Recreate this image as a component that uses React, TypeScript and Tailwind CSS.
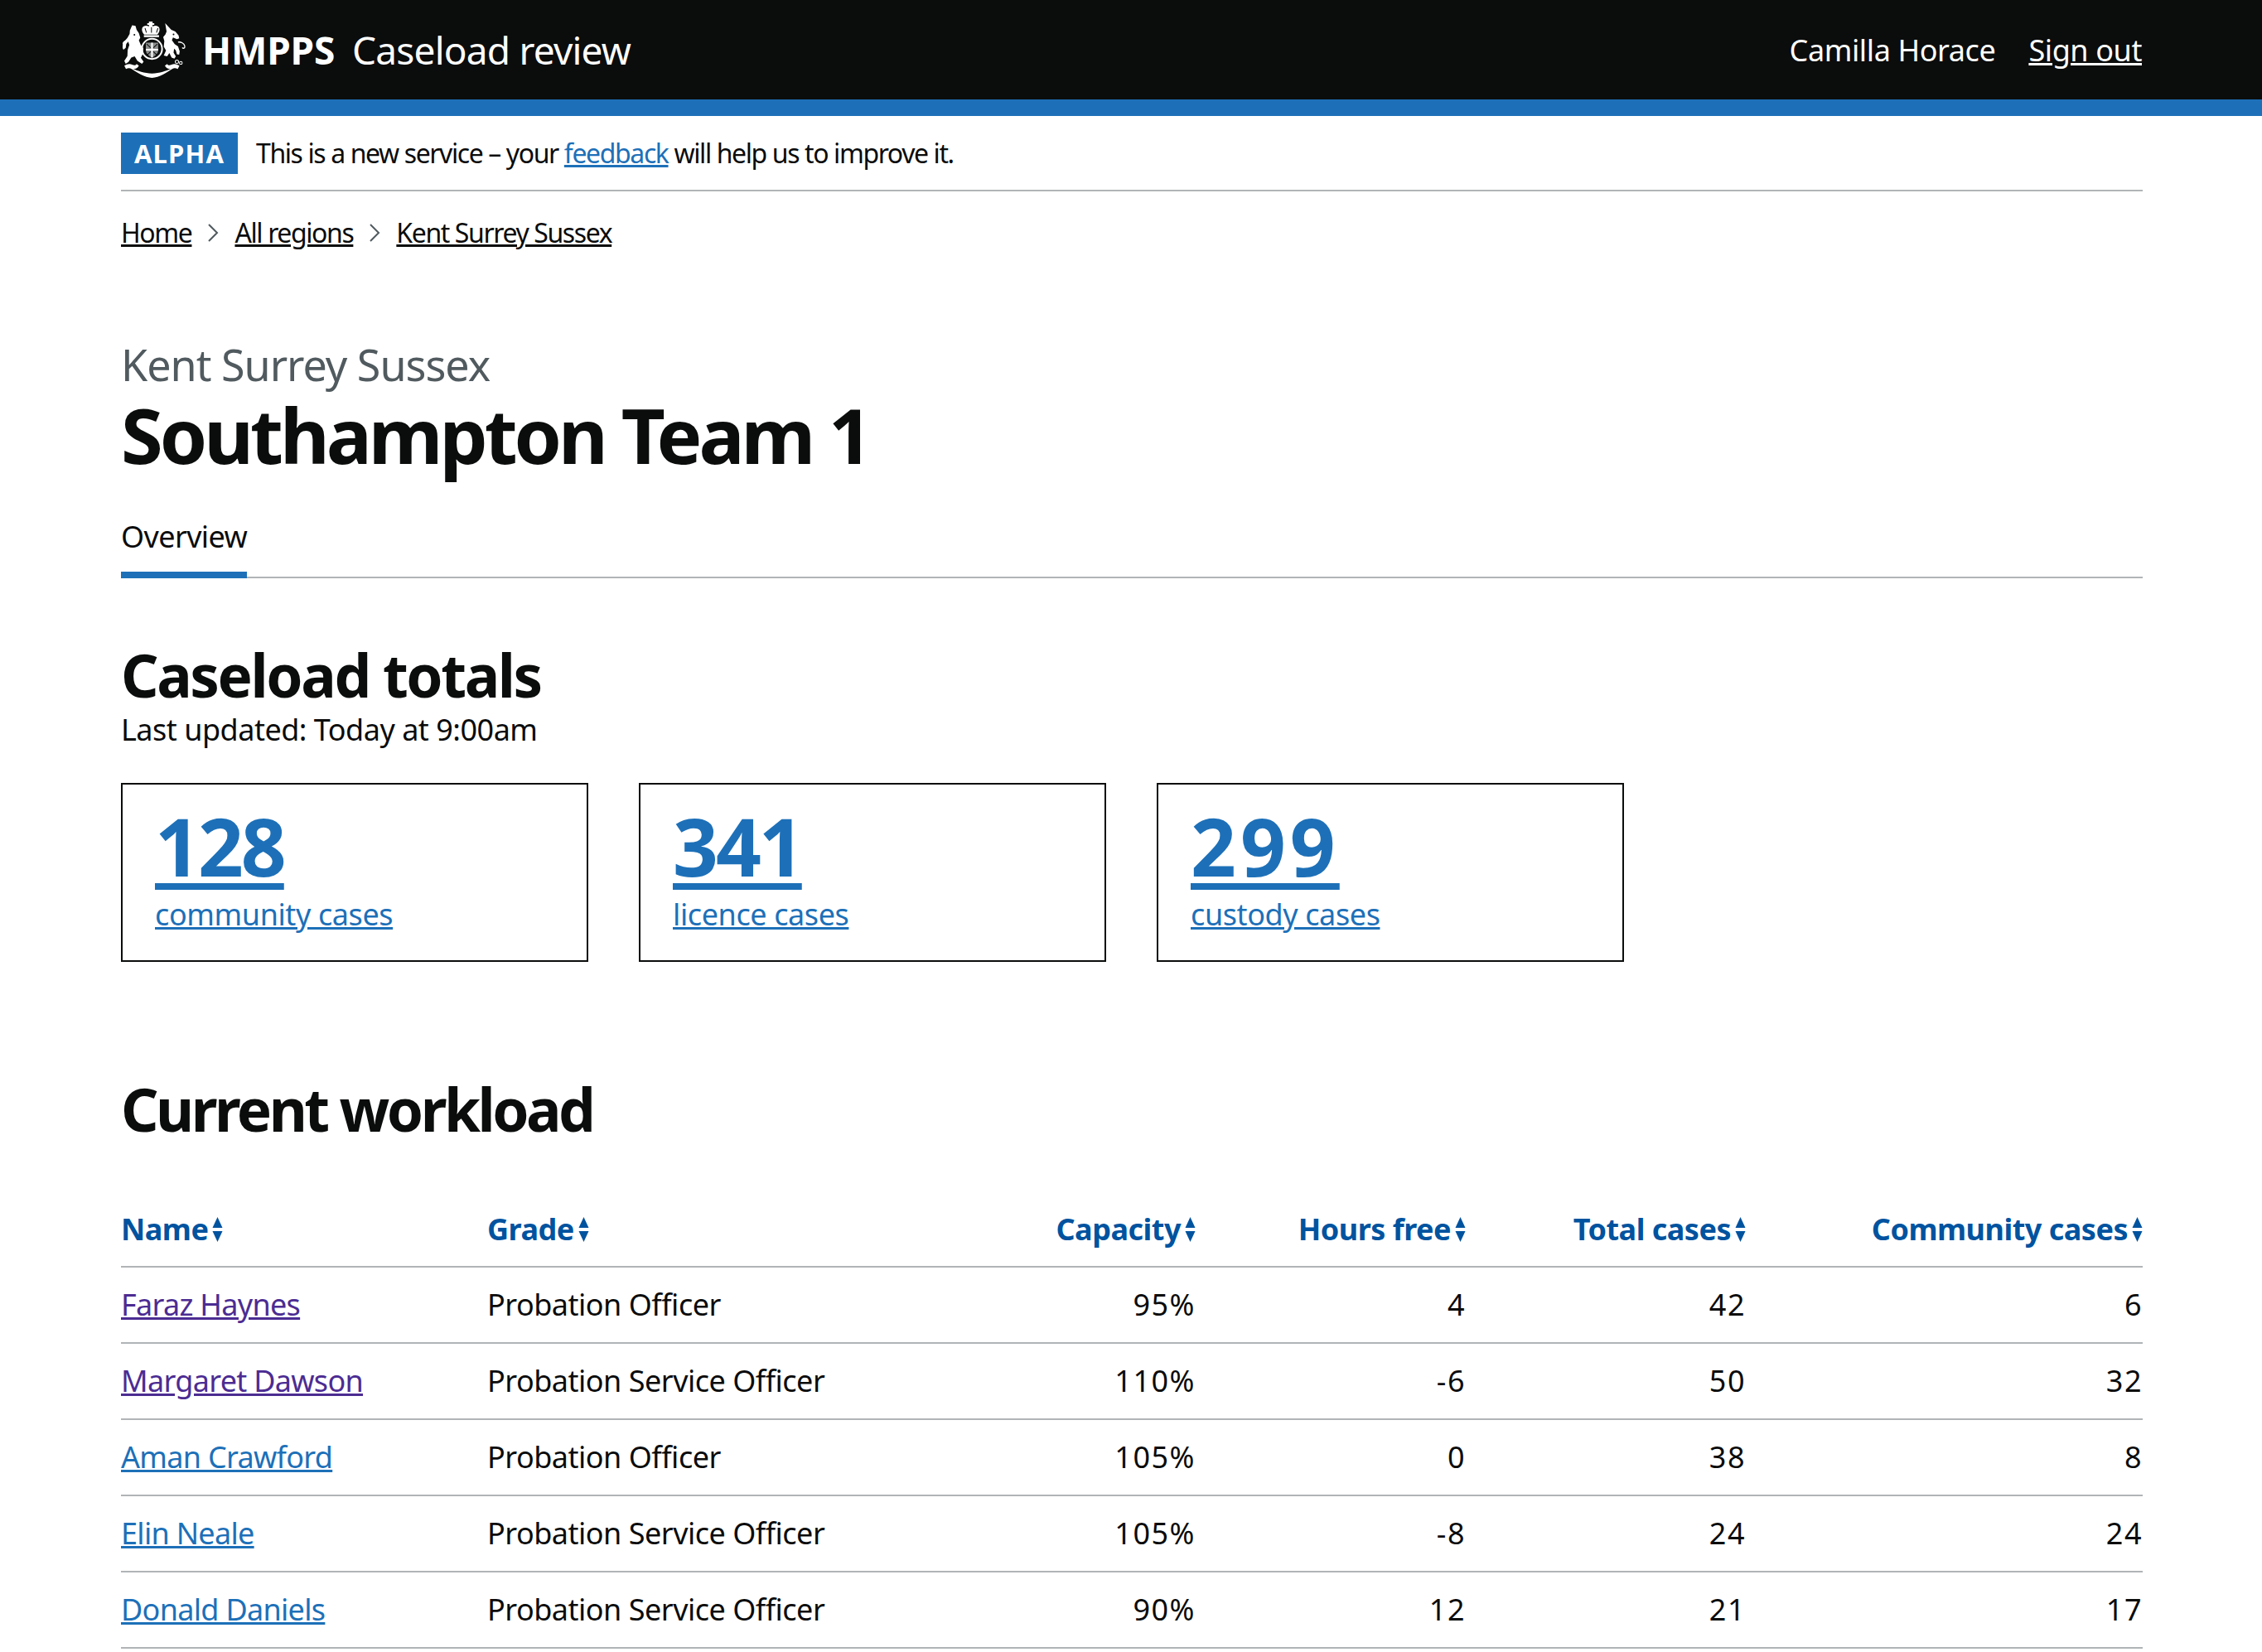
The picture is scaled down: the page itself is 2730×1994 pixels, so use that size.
import React from 'react'

const font = { fontFamily: '"Noto Sans", sans-serif' }

const rows = [
  { name: 'Faraz Haynes', grade: 'Probation Officer', capacity: '95%', hours: '4', total: '42', community: '6', visited: true },
  { name: 'Margaret Dawson', grade: 'Probation Service Officer', capacity: '110%', hours: '-6', total: '50', community: '32', visited: true },
  { name: 'Aman Crawford', grade: 'Probation Officer', capacity: '105%', hours: '0', total: '38', community: '8', visited: false },
  { name: 'Elin Neale', grade: 'Probation Service Officer', capacity: '105%', hours: '-8', total: '24', community: '24', visited: false },
  { name: 'Donald Daniels', grade: 'Probation Service Officer', capacity: '90%', hours: '12', total: '21', community: '17', visited: false },
]

const cards = [
  { value: '128', label: 'community cases', numClass: 'tracking-[-3px]' },
  { value: '341', label: 'licence cases', numClass: 'tracking-[-3px]' },
  { value: '299', label: 'custody cases', numClass: 'tracking-[5px]' },
]

// royal crest, coordinates taken from the 3x crop of the logo
function Crest() {
  return (
    <svg width="76" height="70" viewBox="30 12 225 206" fill="#fff" className="shrink-0">
      {/* crown */}
      <path d="M129 14h8v6h6v6h-6v6c8-5 20-4 24 5 3 8-1 17-7 24H107c-6-7-10-16-7-24 4-9 16-10 24-5v-6h-6v-6h6v-6h5z" />
      <path d="M110 38l5 16M133 34v20M156 38l-5 16" stroke="#0b0c0c" strokeWidth="3" fill="none" />
      <rect x="106" y="63" width="54" height="7" />
      {/* garter ring and shield */}
      <circle cx="135" cy="112" r="36" fill="none" stroke="#fff" strokeWidth="6" />
      <path d="M113 90h44v26c0 14-12 22-22 27-10-5-22-13-22-27z" fill="#8a8c8c" />
      <path d="M132 90h6v53h-6zM113 112h44v6h-44z" />
      <path d="M116 95l14 13M154 95l-14 13M118 134l12-12M152 134l-12-12" stroke="#0b0c0c" strokeWidth="3" fill="none" />
      {/* lion */}
      <path d="M56 46l8-18 12 2 4 14 8 12 5 16-5 10 7 16 9 12-3 22-6 12 10 14-6 7-16-10-10-16-12 4-10 16-10 6-5-10 11-17 1-22 6-18-4-12-7 8-2 14-8 7-4-8 6-20 12-14 8-14z" />
      <path d="M50 80c-8 2-18 8-20 16-1 7 6 9 9 4" fill="none" stroke="#fff" strokeWidth="4" />
      <circle cx="72" cy="62" r="3" fill="#0b0c0c" />
      {/* unicorn */}
      <path d="M182 20l22 24 14 6 12 14 2 10-8 3-14-6-4 10 10 14 12 8 6 18-2 12-8-2-4-14-6-6-2 14 8 14-5 8-10-4-8-16-8 12-12-3 8-18-8-14 2-20-4-14 8-10 4-10-2-12z" />
      <path d="M228 88c10-2 22 4 24 14 1 8-6 10-9 5" fill="none" stroke="#fff" strokeWidth="4" />
      <circle cx="224" cy="158" r="6" fill="none" stroke="#fff" strokeWidth="3" />
      <circle cx="238" cy="162" r="5" fill="none" stroke="#fff" strokeWidth="3" />
      <circle cx="212" cy="60" r="3" fill="#0b0c0c" />
      {/* motto ribbon */}
      <path d="M36 172c10-6 18-8 28-4 6 3 12 4 16-2l8 6c-4 8-10 12-20 12 14 6 40 16 67 16s52-10 66-16c-10 0-16-4-20-12l8-6c4 6 10 5 16 2 10-4 18-2 28 4l-6 12c-8-4-14-4-20 0-18 12-46 30-72 32-26-2-55-20-73-32-6-4-12-4-20 0z" />
    </svg>
  )
}

function SortArrows() {
  return (
    <svg width="13" height="30" viewBox="0 0 12 30" fill="#00539f" className="ml-[5px] shrink-0">
      <path d="M6 0l6 13H0zM6 30L0 17h12z" />
    </svg>
  )
}

function Chevron() {
  return (
    <svg width="14" height="24" viewBox="0 0 14 24" className="mx-[19px]" fill="none" stroke="#505a5f" strokeWidth="2">
      <path d="M2 2l10 10L2 22" />
    </svg>
  )
}

function Th({ label, right, className }: { label: string; right?: boolean; className: string }) {
  return (
    <div className={`${className} flex items-center ${right ? 'justify-end' : ''}`}>
      <span className="text-[36px] font-bold tracking-[-0.5px] text-[#00539f]">{label}</span>
      <SortArrows />
    </div>
  )
}

export default function App() {
  return (
    <div style={font} className="w-[2730px] h-[1994px] overflow-hidden bg-white text-[#0b0c0c]">
      <header className="bg-[#0b0c0c] h-[120px] pl-[148px] pr-[145px] flex items-center justify-between">
        <div className="flex items-center text-white">
          <Crest />
          <span className="ml-[20px] text-[46px] font-bold tracking-[-0.2px]">HMPPS</span>
          <span className="ml-[21px] text-[46px] tracking-[-0.8px]">Caseload review</span>
        </div>
        <div className="flex items-center text-white text-[36px] tracking-[-0.4px] gap-[40px] pt-[2px]">
          <span>Camilla Horace</span>
          <a className="underline">Sign out</a>
        </div>
      </header>
      <div className="h-[20px] bg-[#1d70b8]" />

      <main className="pl-[146px] pr-[144px]">
        <div className="h-[91px] border-b-2 border-[#b1b4b6] pt-[20px] flex items-start">
          <span className="h-[50px] w-[141px] bg-[#1d70b8] text-white text-[31px] font-bold tracking-[1.2px] flex items-center justify-center">ALPHA</span>
          <p className="ml-[22px] text-[32px] leading-[50px] tracking-[-1.4px]">
            This is a new service – your <a className="underline text-[#1d70b8]">feedback</a> will help us to improve it.
          </p>
        </div>

        <nav className="mt-[28px] flex items-center text-[32px] leading-[44px] tracking-[-1.4px]">
          <a className="underline">Home</a>
          <Chevron />
          <a className="underline">All regions</a>
          <Chevron />
          <a className="underline">Kent Surrey Sussex</a>
        </nav>

        <p className="mt-[104px] text-[#505a5f] text-[52px] leading-[66px] tracking-[-1px]">Kent Surrey Sussex</p>
        <h1 className="text-[92px] leading-[100px] font-bold tracking-[-4px] mt-[2px]">Southampton Team 1</h1>

        <div className="mt-[43px] border-b-2 border-[#b1b4b6] h-[80px]">
          <div className="w-[152px] h-[80px] border-b-[8px] border-[#1d70b8] text-[36px] leading-[60px] tracking-[-0.6px]">Overview</div>
        </div>

        <h2 className="mt-[75px] text-[71px] leading-[84px] font-bold tracking-[-2.4px]">Caseload totals</h2>
        <p className="mt-[2px] text-[36px] leading-[44px] tracking-[-0.5px]">Last updated: Today at 9:00am</p>

        <div className="mt-[42px] flex gap-[61px]">
          {cards.map((c) => (
            <div key={c.value} className="w-[564px] h-[216px] border-2 border-[#0b0c0c] px-[39px] pt-[26px] text-[#1d70b8]">
              <a className={`block w-fit text-[96px] leading-[96px] font-bold underline decoration-[8px] underline-offset-[8px] ${c.numClass}`}>{c.value}</a>
              <a className="block w-fit mt-[11px] text-[36px] leading-[48px] tracking-[-0.4px] underline">{c.label}</a>
            </div>
          ))}
        </div>

        <h2 className="mt-[133px] text-[71px] leading-[90px] font-bold tracking-[-3.5px]">Current workload</h2>

        <div className="mt-[56px]">
          <div className="flex h-[90px] items-center border-b-2 border-[#b1b4b6]">
            <Th label="Name" className="w-[442px]" />
            <Th label="Grade" className="w-[440px]" />
            <Th label="Capacity" right className="w-[415px]" />
            <Th label="Hours free" right className="w-[326px]" />
            <Th label="Total cases" right className="w-[338px]" />
            <Th label="Community cases" right className="flex-1" />
          </div>
          {rows.map((r) => (
            <div key={r.name} className="flex h-[92px] items-center border-b-2 border-[#b1b4b6] text-[36px] tracking-[-0.5px]">
              <div className="w-[442px] tracking-[-0.7px]">
                <a className={`underline ${r.visited ? 'text-[#4c2c92]' : 'text-[#1d70b8]'}`}>{r.name}</a>
              </div>
              <div className="w-[440px]">{r.grade}</div>
              <div className="w-[415px] text-right tracking-[1.5px]">{r.capacity}</div>
              <div className="w-[326px] text-right tracking-[1.5px]">{r.hours}</div>
              <div className="w-[338px] text-right tracking-[1.5px]">{r.total}</div>
              <div className="flex-1 text-right tracking-[1.5px]">{r.community}</div>
            </div>
          ))}
        </div>
      </main>
    </div>
  )
}
